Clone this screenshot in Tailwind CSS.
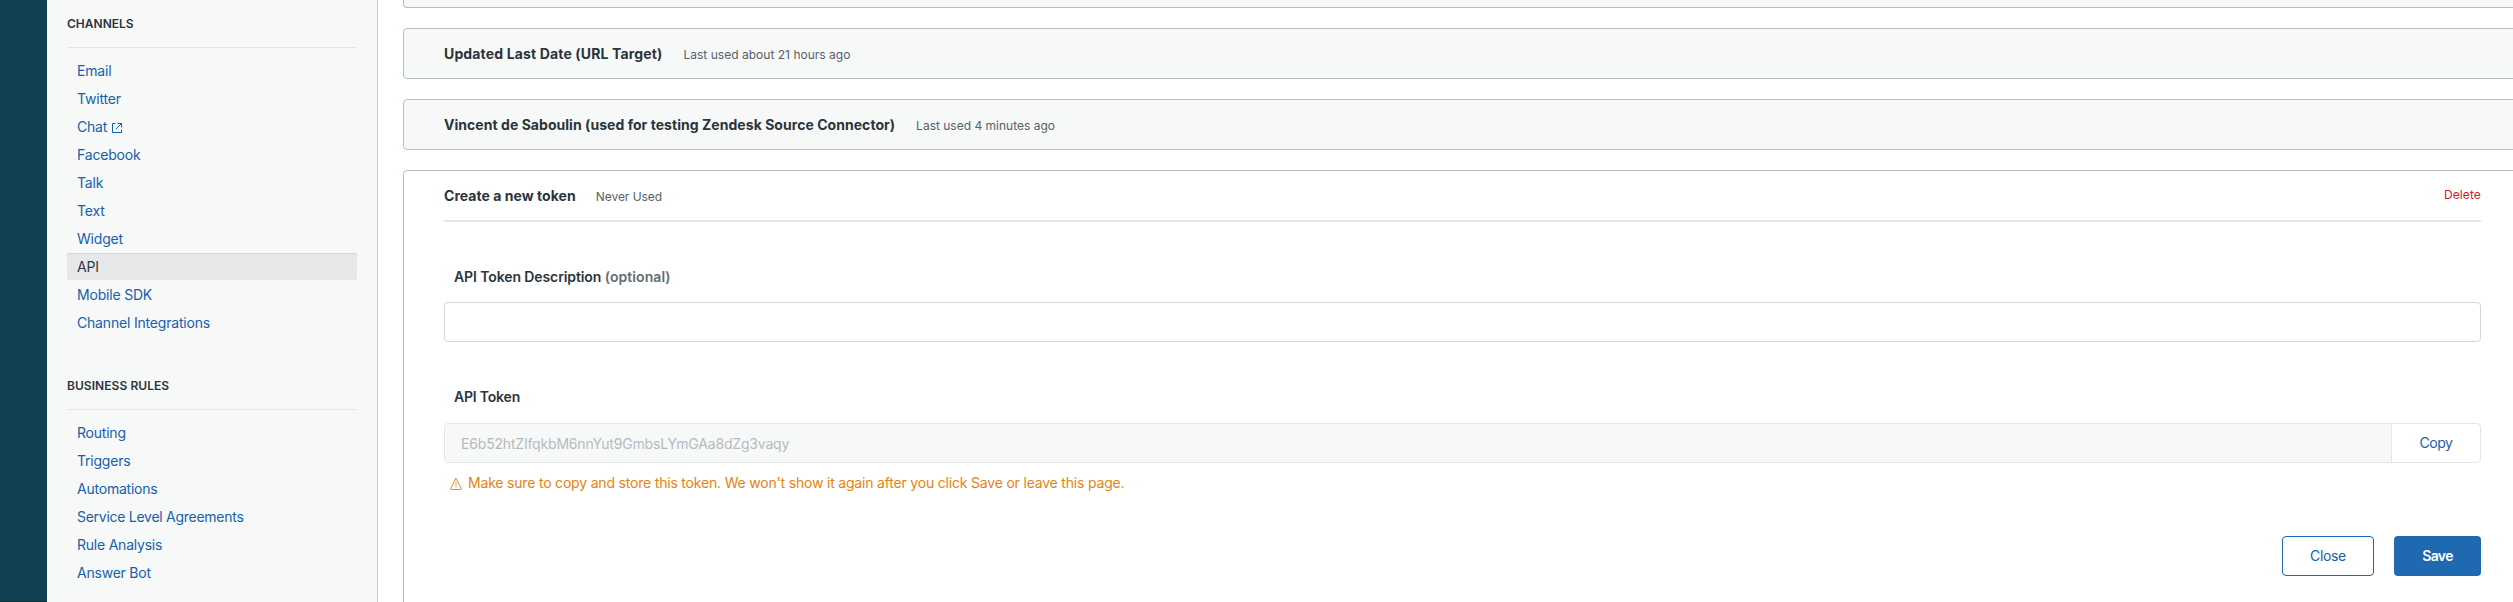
<!DOCTYPE html>
<html lang="en">
<head>
<meta charset="utf-8">
<title>API tokens</title>
<script src="https://cdn.jsdelivr.net/npm/@tailwindcss/browser@4"></script>
</head>
<body class="h-[602px] overflow-hidden bg-white font-['Inter',sans-serif] text-sm text-[#2b343b]">
<div class="flex h-full">
  <div class="w-[47px] shrink-0 border-b border-[#0d3340] bg-[#114152]"></div>

  <nav class="w-[331px] shrink-0 border-r border-[#cdd0d2] bg-[#f7f9f8] px-5">
    <section class="h-[362px]">
      <h2 class="flex h-12 items-center border-b border-[#e4e7e8] text-xs leading-[17px] font-semibold">CHANNELS</h2>
      <ul class="flex flex-col gap-px pt-[9px] leading-[21px] tracking-[-0.19px] text-[#1660ab]">
        <li class="flex h-[27px] items-center px-2.5">Email</li>
        <li class="flex h-[27px] items-center px-2.5">Twitter</li>
        <li class="flex h-[27px] items-center gap-1 px-2.5">Chat
          <svg class="mt-[3px] size-3" viewBox="0 0 12 12" fill="none" stroke="currentColor" stroke-linecap="round" stroke-linejoin="round"><path d="M4 1.5H1.5v9h9V8M7 1.5h3.5V5M10.5 1.5L5 7"/></svg>
        </li>
        <li class="flex h-[27px] items-center px-2.5">Facebook</li>
        <li class="flex h-[27px] items-center px-2.5">Talk</li>
        <li class="flex h-[27px] items-center px-2.5">Text</li>
        <li class="flex h-[27px] items-center px-2.5">Widget</li>
        <li class="flex h-[27px] items-center rounded-[3px] bg-[#e6e8ea] px-2.5 text-[#2f3941] shadow-[inset_0_1px_0_#d3d6d8]">API</li>
        <li class="flex h-[27px] items-center px-2.5">Mobile SDK</li>
        <li class="flex h-[27px] items-center px-2.5">Channel Integrations</li>
      </ul>
    </section>
    <section>
      <h2 class="flex h-12 items-center border-b border-[#e4e7e8] text-xs leading-[17px] font-semibold tracking-[0.06px]">BUSINESS RULES</h2>
      <ul class="flex flex-col gap-px pt-[9px] leading-[21px] tracking-[-0.22px] text-[#1660ab]">
        <li class="flex h-[27px] items-center px-2.5">Routing</li>
        <li class="flex h-[27px] items-center px-2.5">Triggers</li>
        <li class="flex h-[27px] items-center px-2.5">Automations</li>
        <li class="flex h-[27px] items-center px-2.5 tracking-[-0.27px]">Service Level Agreements</li>
        <li class="flex h-[27px] items-center px-2.5">Rule Analysis</li>
        <li class="flex h-[27px] items-center px-2.5">Answer Bot</li>
      </ul>
    </section>
  </nav>

  <main class="flex h-full w-[2135px] shrink-0 flex-col gap-5 overflow-hidden pl-[25px]">
    <div class="h-2 w-[2119px] shrink-0 rounded-b-[4px] border border-t-0 border-[#b5bec2] bg-[#f7f9f8]"></div>
    <div class="flex h-[51px] w-[2119px] shrink-0 items-baseline gap-[21px] rounded-[4px] border border-[#b5bec2] bg-[#f7f9f8] px-10 pt-3.5">
      <h3 class="leading-[21px] font-bold tracking-[0.146px]">Updated Last Date (URL Target)</h3>
      <span class="text-xs leading-[17px] tracking-[0.02px] text-[#56616b]">Last used about 21 hours ago</span>
    </div>
    <div class="flex h-[51px] w-[2119px] shrink-0 items-baseline gap-[21px] rounded-[4px] border border-[#b5bec2] bg-[#f7f9f8] px-10 pt-3.5">
      <h3 class="leading-[21px] font-bold tracking-[0.043px]">Vincent de Saboulin (used for testing Zendesk Source Connector)</h3>
      <span class="text-xs leading-[17px] text-[#56616b]">Last used 4 minutes ago</span>
    </div>

    <div class="h-[500px] w-[2119px] shrink-0 rounded-[4px] border border-[#b5bec2] px-10">
      <div class="flex h-[51px] w-[2037px] items-baseline gap-5 border-b-2 border-[#e5e6e8] pt-3.5">
        <h3 class="leading-[21px] font-bold tracking-[0.046px]">Create a new token</h3>
        <span class="text-xs leading-[17px] tracking-[-0.05px] text-[#56616b]">Never Used</span>
        <a class="mt-px ml-auto self-start text-xs leading-[17px] tracking-[0.12px] text-[#c3202f]">Delete</a>
      </div>
      <form class="w-[2037px] pt-[45px] leading-[19px]">
        <label class="block pl-2.5 font-semibold tracking-[-0.1px]">API Token Description <span class="tracking-[0.08px] text-[#5f6c76]">(optional)</span></label>
        <div class="mt-4 h-10 rounded-[4px] border border-[#d3d6d8]"></div>
        <label class="mt-[45px] block pl-2.5 font-semibold tracking-[-0.2px]">API Token</label>
        <div class="mt-[17px] flex h-10 overflow-hidden rounded-[4px] border border-[#e3e6e8]">
          <div class="flex-1 bg-[#f7f9f8] pt-2.5 pl-4 tracking-[-0.181px] text-[#b4bbc0]">E6b52htZIfqkbM6nnYut9GmbsLYmGAa8dZg3vaqy</div>
          <div class="w-[89px] border-l border-[#e3e6e8] pt-[9px] text-center tracking-[-0.45px] text-[#1660ab]">Copy</div>
        </div>
        <p class="mt-2.5 flex items-start gap-1.5 pl-1.5 tracking-[-0.19px] text-[#e68310]">
          <svg class="mt-[5px] size-3" viewBox="0 0 12 12" fill="none" stroke="currentColor" stroke-width=".9" stroke-linecap="round" stroke-linejoin="round"><path d="M5.6.8.6 10.8q-.2.7.4.7h10q.6 0 .4-.7L6.4.8Q6 .3 5.6.8zM6 4.5v3.2"/><circle cx="6" cy="9.5" r=".5" fill="currentColor" stroke="none"/></svg>
          <span>Make sure to copy and store this token. We won't show it again after you click Save or leave this page.</span>
        </p>
        <div class="mt-[44px] flex justify-end gap-5">
          <button type="button" class="h-10 w-[92px] rounded-[4px] border border-[#1f69b0] pb-px tracking-[-0.35px] text-[#1660ab]">Close</button>
          <button type="button" class="h-10 w-[87px] rounded-[4px] bg-[#1f69b0] pb-px font-semibold tracking-[-0.6px] text-white">Save</button>
        </div>
      </form>
    </div>
  </main>
</div>
</body>
</html>
